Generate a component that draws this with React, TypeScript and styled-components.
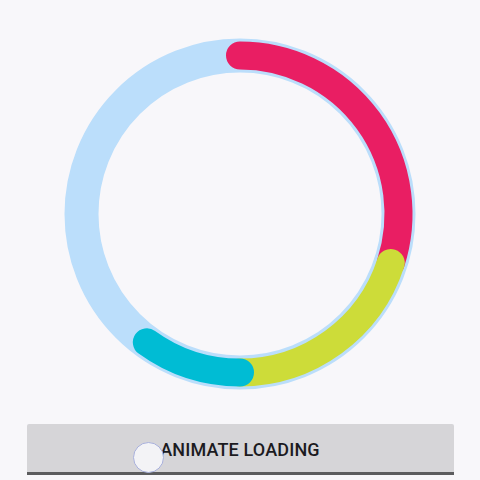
import React from "react";
import styled, { createGlobalStyle } from "styled-components";

const Global = createGlobalStyle`
  html, body { margin: 0; padding: 0; background: #f8f7fa; }
  body { font-family: Roboto, "Noto Sans", sans-serif; }
`;

const Page = styled.div`
  width: 480px;
  height: 480px;
  display: flex;
  flex-direction: column;
  align-items: center;
  overflow: hidden;
`;

const RingBox = styled.div`
  margin-top: 37px;
  width: 354px;
  height: 354px;
`;

const Button = styled.div`
  position: relative;
  margin-top: 33px;
  width: 427px;
  height: 46px;
  box-sizing: content-box;
  background: #d6d5d8;
  border-radius: 2px 2px 0 0;
  border-bottom: 3px solid #5c5c5e;
  display: flex;
  align-items: center;
  justify-content: center;
  font-family: Roboto, sans-serif;
  font-weight: 500;
  font-size: 18px;
  color: #1c1b1f;
  letter-spacing: 0.15px;
  padding-top: 2px;
`;

const Touch = styled.div`
  position: absolute;
  left: 106px;
  top: 18px;
  width: 29px;
  height: 29px;
  border-radius: 50%;
  background: #f3f3f6;
  border: 1px solid #a8b0dc;
`;

const C = 177;
const R = 158.5;

function arcPath(startDeg: number, endDeg: number) {
  const toXY = (d: number) => {
    const a = ((d - 90) * Math.PI) / 180;
    return [C + R * Math.cos(a), C + R * Math.sin(a)];
  };
  const [x1, y1] = toXY(startDeg);
  const [x2, y2] = toXY(endDeg);
  const large = endDeg - startDeg > 180 ? 1 : 0;
  return `M ${x1} ${y1} A ${R} ${R} 0 ${large} 1 ${x2} ${y2}`;
}

const segments = [
  { from: 0, to: 108, color: "#e91e63" },
  { from: 108, to: 180, color: "#cddc39" },
  { from: 180, to: 216, color: "#00bcd4" },
];

export default function App() {
  return (
    <>
      <Global />
      <Page>
        <RingBox>
          <svg width="354" height="354" viewBox="0 0 354 354">
            <circle cx={C} cy={C} r={R} fill="none" stroke="#bbdefb" strokeWidth={34} />
            {segments.map((s) => (
              <path
                key={s.color}
                d={arcPath(s.from, s.to)}
                fill="none"
                stroke={s.color}
                strokeWidth={28}
                strokeLinecap="round"
              />
            ))}
          </svg>
        </RingBox>
        <Button>
          ANIMATE LOADING
          <Touch />
        </Button>
      </Page>
    </>
  );
}
